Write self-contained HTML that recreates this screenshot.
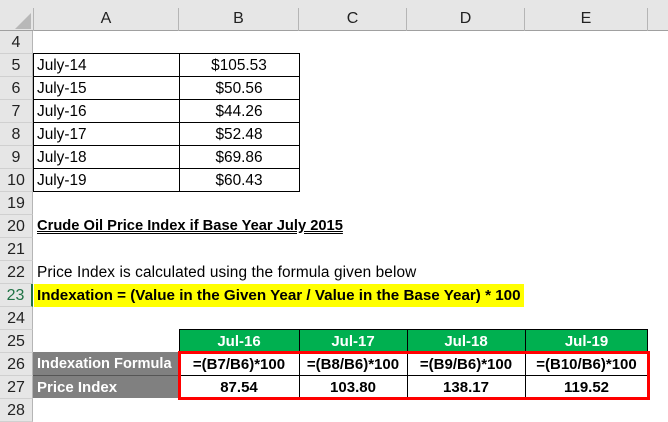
<!DOCTYPE html>
<html><head><style>
*{margin:0;padding:0;box-sizing:border-box}
body{width:668px;height:421px;overflow:hidden;background:#fff;font-family:"Liberation Sans",Arial,sans-serif;font-size:15.4px;position:relative;color:#000}
.a{position:absolute}
.hdr{background:#e6e6e6}
.rh{position:absolute;left:0;width:33px;height:23px;background:#e6e6e6;border-bottom:1px solid #d0d0d0;border-right:1px solid #b5b5b5;text-align:center;line-height:23px;font-size:16px;color:#222}
.ch{position:absolute;top:8px;height:23px;text-align:center;line-height:22px;font-size:16px;border-right:1px solid #b5b5b5;color:#222}
.c{position:absolute;height:23px;line-height:23px;white-space:nowrap}
.b{font-weight:bold;font-size:15px}
</style></head><body>
<div class="a hdr" style="left:0;top:0;width:668px;height:31px;border-bottom:1px solid #a0a0a0"></div>
<svg class="a" style="left:14px;top:13px" width="18" height="17"><polygon points="17,0 17,16 1,16" fill="#b8b8b8"/></svg>
<div class="ch" style="left:33px;width:146px;border-left:1px solid #b5b5b5">A</div>
<div class="ch" style="left:179px;width:120px">B</div>
<div class="ch" style="left:299px;width:108px">C</div>
<div class="ch" style="left:407px;width:118px">D</div>
<div class="ch" style="left:525px;width:123px">E</div>

<div class="rh" style="top:31px">4</div>
<div class="rh" style="top:54px">5</div>
<div class="rh" style="top:77px">6</div>
<div class="rh" style="top:100px">7</div>
<div class="rh" style="top:123px">8</div>
<div class="rh" style="top:146px">9</div>
<div class="rh" style="top:169px">10</div>
<div class="rh" style="top:192px">19</div>
<div class="rh" style="top:215px">20</div>
<div class="rh" style="top:238px">21</div>
<div class="rh" style="top:261px">22</div>
<div class="rh" style="top:284px;color:#217346;border-right:2px solid #217346">23</div>
<div class="rh" style="top:307px">24</div>
<div class="rh" style="top:330px">25</div>
<div class="rh" style="top:353px">26</div>
<div class="rh" style="top:376px">27</div>
<div class="rh" style="top:399px">28</div>

<div class="a" style="left:33px;top:53px;width:267px;height:139px;border:1px solid #000"></div>
<div class="a" style="left:179px;top:53px;width:1px;height:139px;background:#000"></div>
<div class="a" style="left:33px;top:76px;width:267px;height:1px;background:#000"></div>
<div class="a" style="left:33px;top:99px;width:267px;height:1px;background:#000"></div>
<div class="a" style="left:33px;top:122px;width:267px;height:1px;background:#000"></div>
<div class="a" style="left:33px;top:145px;width:267px;height:1px;background:#000"></div>
<div class="a" style="left:33px;top:168px;width:267px;height:1px;background:#000"></div>
<div class="c" style="left:37px;top:54px">July-14</div><div class="c" style="left:179px;width:120px;text-align:center;top:54px">$105.53</div>
<div class="c" style="left:37px;top:77px">July-15</div><div class="c" style="left:179px;width:120px;text-align:center;top:77px">$50.56</div>
<div class="c" style="left:37px;top:100px">July-16</div><div class="c" style="left:179px;width:120px;text-align:center;top:100px">$44.26</div>
<div class="c" style="left:37px;top:123px">July-17</div><div class="c" style="left:179px;width:120px;text-align:center;top:123px">$52.48</div>
<div class="c" style="left:37px;top:146px">July-18</div><div class="c" style="left:179px;width:120px;text-align:center;top:146px">$69.86</div>
<div class="c" style="left:37px;top:169px">July-19</div><div class="c" style="left:179px;width:120px;text-align:center;top:169px">$60.43</div>

<div class="c b" style="left:37px;top:215px;font-size:14.7px;text-decoration:underline double">Crude Oil Price Index if Base Year July 2015</div>
<div class="c" style="left:37px;top:261px;letter-spacing:0.1px">Price Index is calculated using the formula given below</div>
<div class="a" style="left:34px;top:284px;width:490px;height:23px;background:#ffff00"></div>
<div class="c b" style="left:37px;top:284px;font-size:15.2px">Indexation = (Value in the Given Year / Value in the Base Year) * 100</div>

<div class="a" style="left:179px;top:329px;width:469px;height:24px;background:#00b050;border:1px solid #000"></div>
<div class="a" style="left:299px;top:329px;width:1px;height:24px;background:#000"></div>
<div class="a" style="left:407px;top:329px;width:1px;height:24px;background:#000"></div>
<div class="a" style="left:525px;top:329px;width:1px;height:24px;background:#000"></div>
<div class="c b" style="left:179px;width:120px;text-align:center;top:330px;color:#fff">Jul-16</div>
<div class="c b" style="left:299px;width:108px;text-align:center;top:330px;color:#fff">Jul-17</div>
<div class="c b" style="left:407px;width:118px;text-align:center;top:330px;color:#fff">Jul-18</div>
<div class="c b" style="left:525px;width:123px;text-align:center;top:330px;color:#fff">Jul-19</div>

<div class="a" style="left:33px;top:352px;width:146px;height:46px;background:#808080"></div>
<div class="a" style="left:33px;top:375px;width:146px;height:1px;background:#555"></div>
<div class="c b" style="left:37px;top:353px;color:#fff;font-size:14.6px">Indexation Formula</div>
<div class="c b" style="left:37px;top:376px;color:#fff">Price Index</div>

<div class="a" style="left:179px;top:375px;width:469px;height:1px;background:#000"></div>
<div class="a" style="left:299px;top:352px;width:1px;height:46px;background:#000"></div>
<div class="a" style="left:407px;top:352px;width:1px;height:46px;background:#000"></div>
<div class="a" style="left:525px;top:352px;width:1px;height:46px;background:#000"></div>
<div class="c b" style="left:179px;width:120px;text-align:center;top:353px">=(B7/B6)*100</div>
<div class="c b" style="left:299px;width:108px;text-align:center;top:353px">=(B8/B6)*100</div>
<div class="c b" style="left:407px;width:118px;text-align:center;top:353px">=(B9/B6)*100</div>
<div class="c b" style="left:525px;width:123px;text-align:center;top:353px">=(B10/B6)*100</div>
<div class="c b" style="left:179px;width:120px;text-align:center;top:376px">87.54</div>
<div class="c b" style="left:299px;width:108px;text-align:center;top:376px">103.80</div>
<div class="c b" style="left:407px;width:118px;text-align:center;top:376px">138.17</div>
<div class="c b" style="left:525px;width:123px;text-align:center;top:376px">119.52</div>
<div class="a" style="left:178px;top:351px;width:472px;height:49px;border:3px solid #ff0000"></div>
</body></html>
